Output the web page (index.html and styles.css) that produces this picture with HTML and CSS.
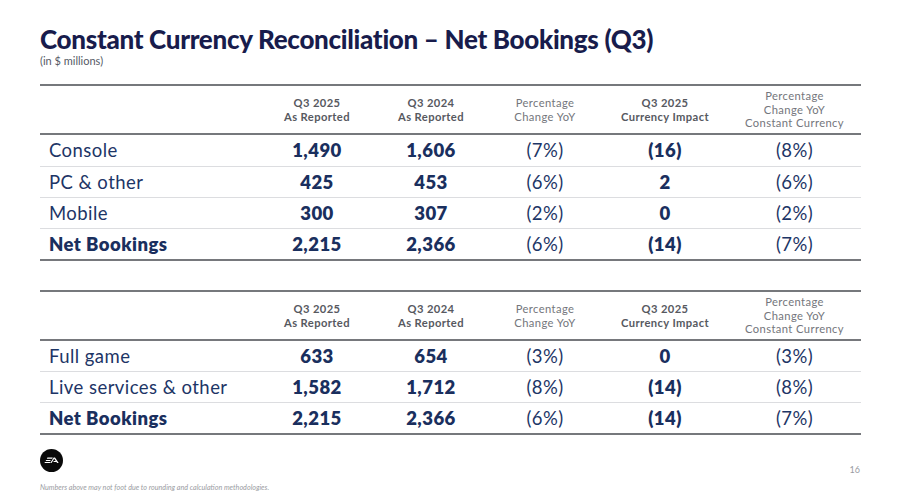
FILE: index.html
```html
<!DOCTYPE html>
<html>
<head>
<meta charset="utf-8">
<link rel="stylesheet" href="styles.css">
</head>
<body>
<div class="slide">
  <h1 class="title">Constant Currency Reconciliation – Net Bookings (Q3)</h1>
  <div class="subtitle">(in $ millions)</div>

  <table class="recon first">
    <colgroup>
      <col class="c-label"><col class="c-num"><col class="c-num"><col class="c-num"><col class="c-imp"><col class="c-last">
    </colgroup>
    <thead>
      <tr>
        <th></th>
        <th class="strong">Q3 2025<br>As Reported</th>
        <th class="strong">Q3 2024<br>As Reported</th>
        <th>Percentage<br>Change YoY</th>
        <th class="strong">Q3 2025<br>Currency Impact</th>
        <th>Percentage<br>Change YoY<br>Constant Currency</th>
      </tr>
    </thead>
    <tbody>
      <tr><td class="label">Console</td><td class="b">1,490</td><td class="b">1,606</td><td>(7%)</td><td class="b">(16)</td><td>(8%)</td></tr>
      <tr><td class="label">PC &amp; other</td><td class="b">425</td><td class="b">453</td><td>(6%)</td><td class="b">2</td><td>(6%)</td></tr>
      <tr><td class="label">Mobile</td><td class="b">300</td><td class="b">307</td><td>(2%)</td><td class="b">0</td><td>(2%)</td></tr>
      <tr class="total"><td class="label">Net Bookings</td><td class="b">2,215</td><td class="b">2,366</td><td>(6%)</td><td class="b">(14)</td><td>(7%)</td></tr>
    </tbody>
  </table>

  <table class="recon second">
    <colgroup>
      <col class="c-label"><col class="c-num"><col class="c-num"><col class="c-num"><col class="c-imp"><col class="c-last">
    </colgroup>
    <thead>
      <tr>
        <th></th>
        <th class="strong">Q3 2025<br>As Reported</th>
        <th class="strong">Q3 2024<br>As Reported</th>
        <th>Percentage<br>Change YoY</th>
        <th class="strong">Q3 2025<br>Currency Impact</th>
        <th>Percentage<br>Change YoY<br>Constant Currency</th>
      </tr>
    </thead>
    <tbody>
      <tr><td class="label">Full game</td><td class="b">633</td><td class="b">654</td><td>(3%)</td><td class="b">0</td><td>(3%)</td></tr>
      <tr><td class="label">Live services &amp; other</td><td class="b">1,582</td><td class="b">1,712</td><td>(8%)</td><td class="b">(14)</td><td>(8%)</td></tr>
      <tr class="total"><td class="label">Net Bookings</td><td class="b">2,215</td><td class="b">2,366</td><td>(6%)</td><td class="b">(14)</td><td>(7%)</td></tr>
    </tbody>
  </table>

  <div class="footer">
    <div class="footer-left">
      <svg class="ea-logo" width="23" height="23" viewBox="0 0 23 23">
        <circle cx="11.5" cy="11.5" r="11.5" fill="#0a0a0a"/>
        <path d="M7.4 8.6 H12.8 L12.2 9.7 H6.8 Z M6.2 10.9 H10.8 L10.2 11.9 H5.6 Z M5.0 13.0 H10.4 L9.8 14.1 H4.4 Z" fill="#fff"/>
        <path d="M13.7 8.6 H15.0 L18.7 14.1 H17.2 L16.4 12.9 H13.3 L13.9 11.9 H15.7 L14.2 9.8 L11.5 14.1 H10.2 Z" fill="#fff"/>
      </svg>
      <div class="footnote">Numbers above may not foot due to rounding and calculation methodologies.</div>
    </div>
    <div class="page-num">16</div>
  </div>
</div>
</body>
</html>
```

FILE: styles.css
```css
html, body {
  margin: 0;
  padding: 0;
  background: #ffffff;
}

body {
  font-family: Lato, "Noto Sans", sans-serif;
  width: 900px;
  height: 500px;
  overflow: hidden;
}

.slide {
  padding: 24px 39px 0 40px;
  height: 500px;
  box-sizing: border-box;
  display: flex;
  flex-direction: column;
}

.title {
  margin: 0;
  font-size: 26px;
  font-weight: 900;
  color: #181c4c;
  line-height: 30px;
  letter-spacing: -0.3px;
}

.subtitle {
  font-size: 11px;
  color: #555a66;
  line-height: 14px;
}

.recon {
  width: 821px;
  border-collapse: collapse;
  table-layout: fixed;
  color: #1d3566;
}

.recon.first {
  margin-top: 16px;
}

.recon.second {
  margin-top: 29px;
}

.c-label { width: 220px; }
.c-num { width: 114px; }
.c-imp { width: 126px; }
.c-last { width: 133px; }

.recon thead tr {
  height: 49px;
  border-top: 2px solid #76787c;
  border-bottom: 2px solid #76787c;
}

.recon th {
  font-size: 11.2px;
  letter-spacing: 0.4px;
  font-weight: 400;
  line-height: 13.4px;
  color: #74767c;
  text-align: center;
  vertical-align: middle;
  padding: 0;
}

.recon th.strong {
  font-weight: 700;
  color: #57595f;
}

.recon td {
  height: 30px;
  padding: 0;
  text-align: center;
  font-size: 18.5px;
  letter-spacing: 0.45px;
  line-height: 30px;
  border-bottom: 1px solid #dcdde0;
}

.recon.first tbody tr:first-child td {
  height: 31px;
  line-height: 31px;
}

.recon td.label {
  text-align: left;
  padding-left: 9px;
}

.recon td.b {
  font-weight: 800;
  color: #1a2f5e;
}

.recon tr.total td {
  border-bottom: 2px solid #76787c;
}

.recon tr.total td.label {
  font-weight: 800;
  color: #1a2f5e;
}

.footer {
  margin-top: 14px;
  display: flex;
  justify-content: space-between;
  align-items: flex-start;
}

.footer-left {
  display: flex;
  flex-direction: column;
}

.ea-logo {
  display: block;
}

.footnote {
  margin-top: 11px;
  font-size: 7.2px;
  font-style: italic;
  color: #9a9ca2;
  line-height: 9px;
}

.page-num {
  font-size: 9px;
  color: #9a9ca2;
  margin-top: 15px;
  margin-right: 1px;
}
```
